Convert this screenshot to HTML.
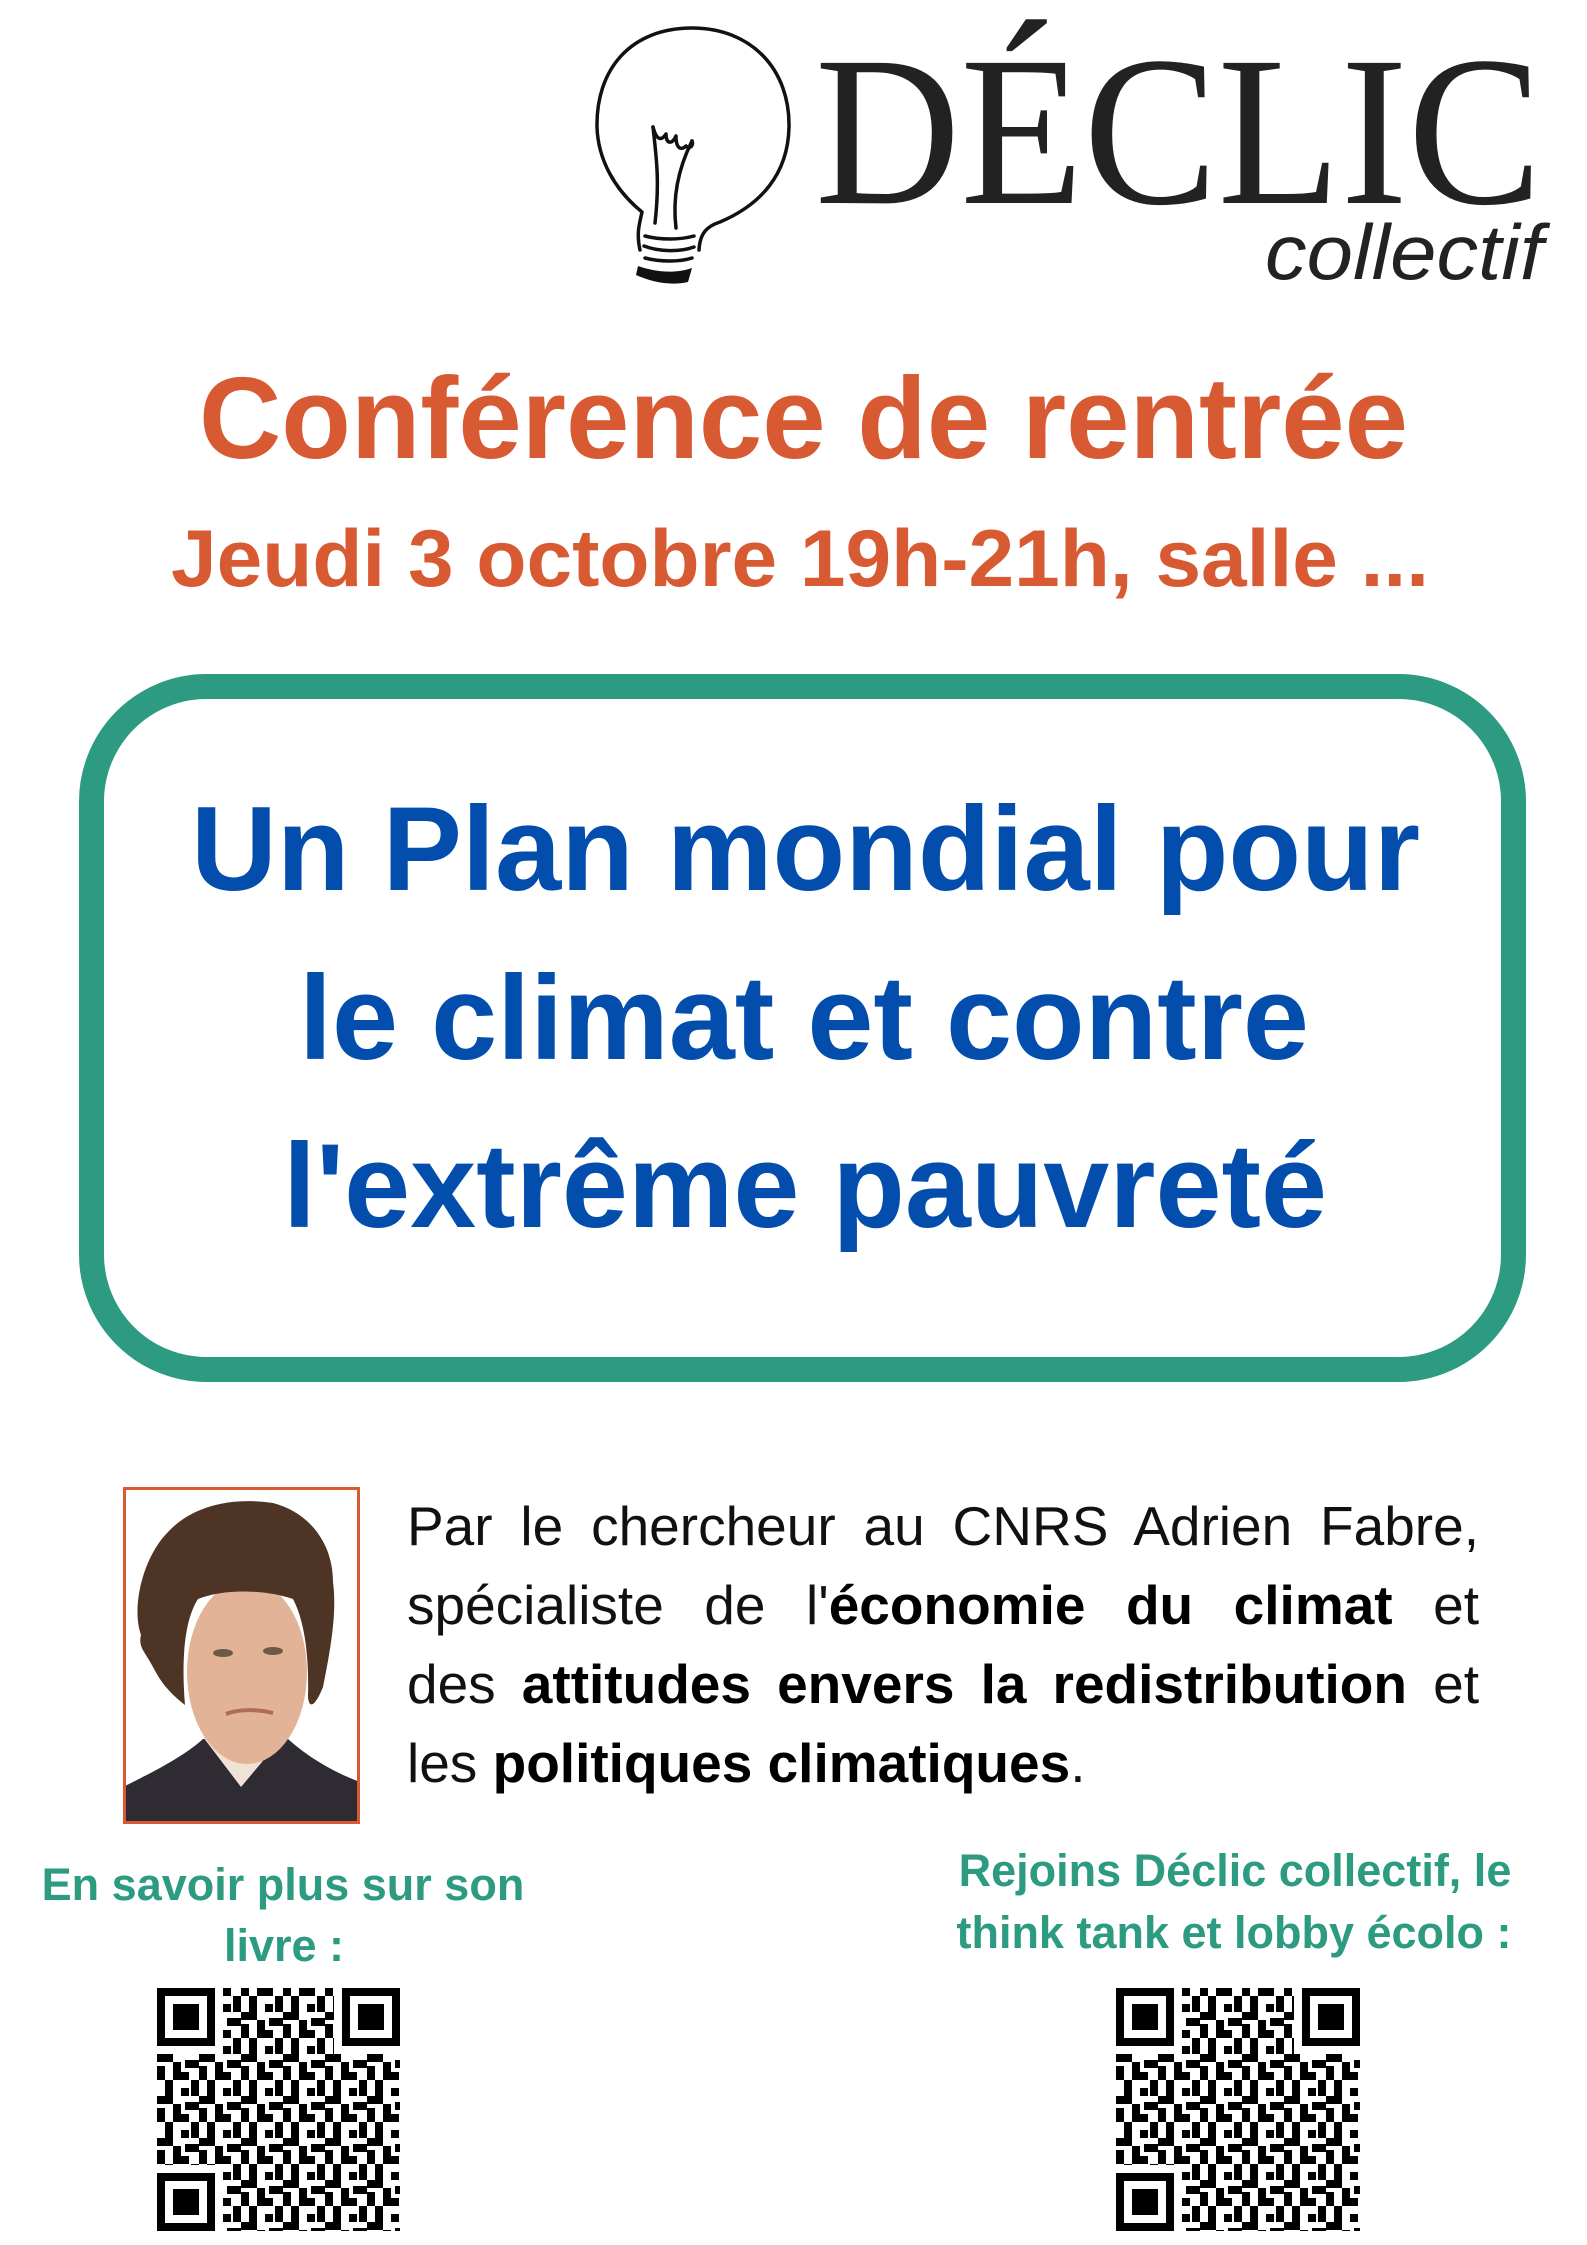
<!DOCTYPE html>
<html><head><meta charset="utf-8"><style>
html,body{margin:0;padding:0;background:#fff}
body{width:1587px;height:2245px;position:relative;overflow:hidden;font-family:"Liberation Sans",sans-serif}
.abs{position:absolute}
.para{position:absolute;left:407px;top:1487px;width:1072px;font-size:55px;line-height:79px;color:#111}
.para div{text-align:justify;text-align-last:justify;white-space:nowrap}
.para div.last{text-align-last:left}
.para b{font-weight:bold;color:#000}
</style></head><body>

<svg class="abs" style="left:0;top:0" width="1587" height="1400" viewBox="0 0 1587 1400">
  <g fill="none" stroke="#111" stroke-width="3.5" stroke-linecap="round" stroke-linejoin="round">
    <path d="M640 250 C636 232 640 222 642 212 C615 190 598 160 597 127 C596 70 630 28 692 28 C752 28 790 70 789 127 C788 175 760 205 720 222 C708 226 700 232 699 250"/>
    <path d="M653 127 C656 155 660 180 655 223"/>
    <path d="M653 127 C657 142 662 140 666 134 C666 144 672 145 676 136 C676 150 682 150 686 146 C690 150 694 145 692 141"/>
    <path d="M692 141 C680 165 672 195 676 228"/>
    <path d="M645 236 C660 240 680 240 694 236"/>
    <path d="M644 246 C660 252 680 252 694 247"/>
    <path d="M645 258 C660 262 680 262 692 258"/>
  </g>
  <path d="M638 266 C655 272 675 274 692 268 L688 282 C670 286 652 282 636 275 Z" fill="#111"/>
  <text x="815" y="203" font-family="Liberation Serif,serif" font-size="214" fill="#222" textLength="727" lengthAdjust="spacingAndGlyphs">DÉCLIC</text>
  <text x="1265" y="279" font-family="Liberation Sans,sans-serif" font-style="italic" font-size="78" fill="#222" textLength="278" lengthAdjust="spacingAndGlyphs">collectif</text>

  <text x="199" y="458" font-family="Liberation Sans,sans-serif" font-weight="bold" font-size="116" fill="#d85a33" textLength="1209" lengthAdjust="spacingAndGlyphs">Conférence de rentrée</text>
  <text x="171" y="586" font-family="Liberation Sans,sans-serif" font-weight="bold" font-size="81" fill="#d85a33" textLength="1258" lengthAdjust="spacingAndGlyphs">Jeudi 3 octobre 19h-21h, salle ...</text>

  <rect x="91.5" y="686.5" width="1422" height="683" rx="115" ry="115" fill="#fff" stroke="#2d9a82" stroke-width="25"/>
  <g font-family="Liberation Sans,sans-serif" font-weight="bold" font-size="120" fill="#034ead">
    <text x="191" y="890" textLength="1229" lengthAdjust="spacingAndGlyphs">Un Plan mondial pour</text>
    <text x="299" y="1059" textLength="1010" lengthAdjust="spacingAndGlyphs">le climat et contre</text>
    <text x="283" y="1227" textLength="1044" lengthAdjust="spacingAndGlyphs">l'extrême pauvreté</text>
  </g>
</svg>

<svg class="abs" style="left:123px;top:1487px" width="237" height="337" viewBox="0 0 237 337">
  <rect x="0" y="0" width="237" height="337" fill="#fff"/>
  <path d="M0 300 C30 285 60 270 80 252 L165 252 C185 270 210 285 237 295 L237 337 L0 337 Z" fill="#2e2b33"/>
  <path d="M80 250 L118 300 L160 250 Z" fill="#f1e2d8"/>
  <ellipse cx="124" cy="185" rx="60" ry="92" fill="#e2b396"/>
  <path d="M18 148 C8 120 20 70 45 45 C70 18 110 10 150 16 C185 25 210 55 210 95 C214 125 208 160 200 200 C192 220 186 222 185 210 C186 170 182 135 170 112 C140 102 100 102 75 112 C62 132 58 170 62 218 C52 210 40 200 30 180 C22 165 15 160 18 148 Z" fill="#4e3424"/>
  <ellipse cx="100" cy="166" rx="10" ry="4" fill="#6b5a44"/>
  <ellipse cx="150" cy="164" rx="10" ry="4" fill="#6b5a44"/>
  <path d="M103 227 C115 222 135 222 150 226" stroke="#b06b5a" stroke-width="4" fill="none"/>
  <rect x="1.5" y="1.5" width="234" height="334" fill="none" stroke="#d85a33" stroke-width="3"/>
</svg>

<div class="para">
  <div>Par le chercheur au CNRS Adrien Fabre,</div>
  <div>spécialiste de l'<b>économie du climat</b> et</div>
  <div>des <b>attitudes envers la redistribution</b> et</div>
  <div class="last">les <b>politiques climatiques</b>.</div>
</div>

<svg class="abs" style="left:0;top:1840px" width="1587" height="405" viewBox="0 1840 1587 405">
  <defs>
    <pattern id="qr" width="42" height="42" patternUnits="userSpaceOnUse">
      <rect x="0" y="0" width="8" height="8" fill="#000"/><rect x="16" y="0" width="16" height="8" fill="#000"/>
      <rect x="8" y="8" width="8" height="16" fill="#000"/><rect x="24" y="16" width="8" height="8" fill="#000"/>
      <rect x="34" y="8" width="8" height="16" fill="#000"/><rect x="0" y="24" width="16" height="8" fill="#000"/>
      <rect x="16" y="32" width="8" height="10" fill="#000"/><rect x="28" y="30" width="14" height="8" fill="#000"/>
      <rect x="0" y="36" width="8" height="6" fill="#000"/>
    </pattern>
    <g id="finder"><rect x="4" y="4" width="50" height="50" fill="none" stroke="#000" stroke-width="8"/><rect x="16" y="16" width="26" height="26" fill="#000"/></g>
  </defs>
  <g font-family="Liberation Sans,sans-serif" font-weight="bold" font-size="45" fill="#2d9a82" text-anchor="middle">
    <text x="283" y="1900">En savoir plus sur son</text>
    <text x="284" y="1961">livre :</text>
    <text x="1235" y="1886">Rejoins Déclic collectif, le</text>
    <text x="1234" y="1948">think tank et lobby écolo :</text>
  </g>
  <g transform="translate(157,1988)">
    <rect width="243" height="243" fill="url(#qr)"/>
    <rect x="0" y="0" width="66" height="66" fill="#fff"/><rect x="177" y="0" width="66" height="66" fill="#fff"/><rect x="0" y="177" width="66" height="66" fill="#fff"/>
    <use href="#finder"/><use href="#finder" x="185"/><use href="#finder" y="185"/>
  </g>
  <g transform="translate(1116,1988)">
    <rect width="244" height="243" fill="url(#qr)"/>
    <rect x="0" y="0" width="66" height="66" fill="#fff"/><rect x="178" y="0" width="66" height="66" fill="#fff"/><rect x="0" y="177" width="66" height="66" fill="#fff"/>
    <use href="#finder"/><use href="#finder" x="186"/><use href="#finder" y="185"/>
  </g>
</svg>
</body></html>
